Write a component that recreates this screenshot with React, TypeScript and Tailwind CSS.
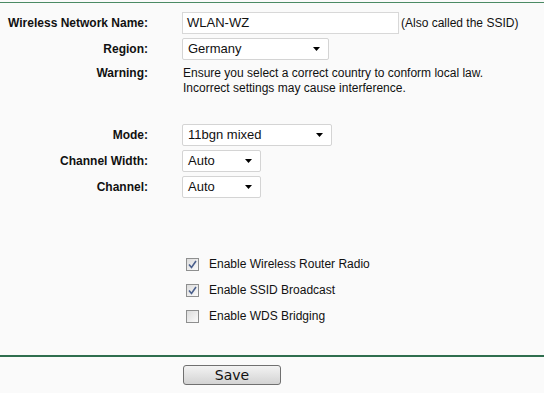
import React from "react";

function Arrow() {
  return (
    <svg width="7" height="4" viewBox="0 0 7 4" className="shrink-0">
      <path d="M0 0 H7 L3.5 4 Z" fill="#000" />
    </svg>
  );
}

function Select({ value, w }: { value: string; w: string }) {
  return (
    <div
      className={`${w} h-[22px] flex items-center justify-between pl-[5px] pr-[8px] bg-white border border-[#d4d4d4] rounded-[2px] text-[13px] text-[#111]`}
    >
      <span>{value}</span>
      <Arrow />
    </div>
  );
}

function Check({ checked }: { checked: boolean }) {
  return (
    <div className="w-[13px] h-[13px] border border-[#8e8f8f] bg-gradient-to-br from-[#dcdcdc] to-[#fbfbfb] flex items-center justify-center shrink-0">
      {checked && (
        <svg width="9" height="9" viewBox="0 0 9 9">
          <path d="M1 4.5 L3.5 7.5 L8 1" fill="none" stroke="#4a5f8c" strokeWidth="1.6" />
        </svg>
      )}
    </div>
  );
}

function Label({ children }: { children: React.ReactNode }) {
  return <div className="w-[150px] pr-[2px] text-right font-bold text-[12px] text-[#111] shrink-0">{children}</div>;
}

export default function App() {
  return (
    <div className="w-[544px] h-[393px] bg-[#fafafa] font-['Liberation_Sans',Arial,sans-serif] text-[12px] text-[#111] overflow-hidden">
      <div className="pt-[2px]">
        <div className="h-px bg-[#4b8a64]" />
      </div>

      <div className="flex items-center h-[22px] mt-[9px]">
        <Label>Wireless Network Name:</Label>
        <div className="ml-[32px] w-[217px] h-[22px] bg-white border border-[#d8d8d8] flex items-center pl-[4px] text-[13px]">
          WLAN-WZ
        </div>
        <span className="ml-[2px] text-[12px]">(Also called the SSID)</span>
      </div>

      <div className="flex items-center h-[22px] mt-[4px]">
        <Label>Region:</Label>
        <div className="ml-[32px]">
          <Select value="Germany" w="w-[147px]" />
        </div>
      </div>

      <div className="flex mt-[6px] leading-[15px]">
        <Label>Warning:</Label>
        <div className="ml-[33px] text-[12px]">
          <div>Ensure you select a correct country to conform local law.</div>
          <div>Incorrect settings may cause interference.</div>
        </div>
      </div>

      <div className="flex items-center h-[22px] mt-[28px]">
        <Label>Mode:</Label>
        <div className="ml-[32px]">
          <Select value="11bgn mixed" w="w-[150px]" />
        </div>
      </div>
      <div className="flex items-center h-[22px] mt-[4px]">
        <Label>Channel Width:</Label>
        <div className="ml-[32px]">
          <Select value="Auto" w="w-[79px]" />
        </div>
      </div>
      <div className="flex items-center h-[22px] mt-[4px]">
        <Label>Channel:</Label>
        <div className="ml-[32px]">
          <Select value="Auto" w="w-[79px]" />
        </div>
      </div>

      <div className="mt-[53px] pl-[186px]">
        {[
          { t: "Enable Wireless Router Radio", c: true },
          { t: "Enable SSID Broadcast", c: true },
          { t: "Enable WDS Bridging", c: false },
        ].map((r) => (
          <div key={r.t} className="h-[26px] flex items-center gap-[10px]">
            <Check checked={r.c} />
            <span className="text-[12px]">{r.t}</span>
          </div>
        ))}
      </div>

      <div className="mt-[26px] h-[2px] bg-[#2f6e4e]" />

      <div className="mt-[8px] pl-[183px]">
        <button className="w-[98px] h-[20px] rounded-[3px] border border-[#707070] bg-gradient-to-b from-[#f3f3f3] to-[#d3d3d3] text-[14px] leading-none font-['DejaVu_Sans',sans-serif] text-[#111] flex items-center justify-center">
          Save
        </button>
      </div>
    </div>
  );
}
